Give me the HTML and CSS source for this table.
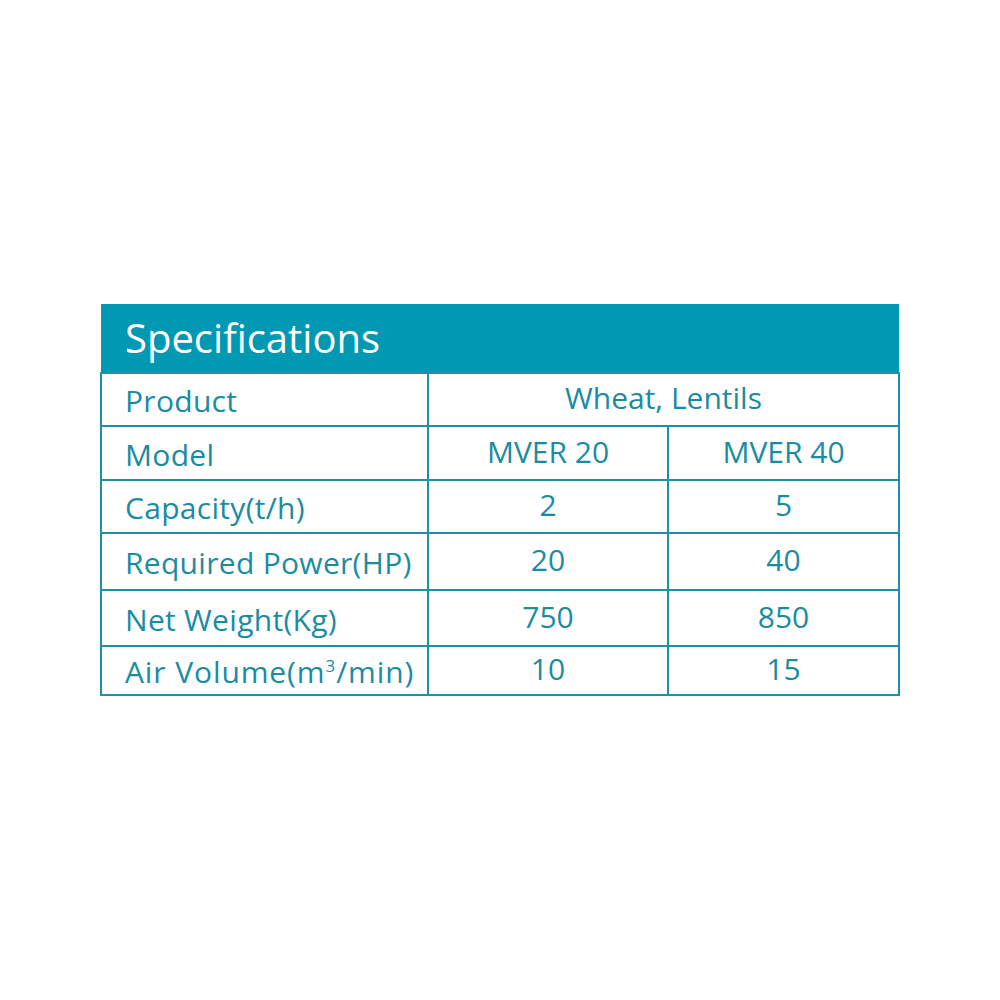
FILE: index.html
```html
<!DOCTYPE html>
<html>
<head>
	<meta charset="utf-8">
	<title>Specifications</title>
	<link rel="stylesheet" href="styles.css">
</head>
<body>
	<div class="page">
		<table class="spec-table">
			<colgroup>
				<col class="col-label">
				<col class="col-a">
				<col class="col-b">
			</colgroup>
			<tr class="head-row">
				<th colspan="3">Specifications</th>
			</tr>
			<tr class="r1">
				<td class="label">Product</td>
				<td colspan="2" class="val">Wheat, Lentils</td>
			</tr>
			<tr class="r2">
				<td class="label">Model</td>
				<td class="val">MVER 20</td>
				<td class="val">MVER 40</td>
			</tr>
			<tr class="r3">
				<td class="label">Capacity(t/h)</td>
				<td class="val">2</td>
				<td class="val">5</td>
			</tr>
			<tr class="r4">
				<td class="label">Required Power(HP)</td>
				<td class="val">20</td>
				<td class="val">40</td>
			</tr>
			<tr class="r5">
				<td class="label">Net Weight(Kg)</td>
				<td class="val">750</td>
				<td class="val">850</td>
			</tr>
			<tr class="r6">
				<td class="label wide">Air Volume(m<sup>3</sup>/min)</td>
				<td class="val">10</td>
				<td class="val">15</td>
			</tr>
		</table>
	</div>
</body>
</html>
```

FILE: styles.css
```css
body {
	margin: 0;
	padding: 0;
	background-color: #fff;
	font-family: "Open Sans", "Liberation Sans", sans-serif;
}

.page {
	width: 1000px;
	height: 1000px;
	padding-top: 304px;
	box-sizing: border-box;
}

.spec-table {
	margin-left: 100px;
	width: 800px;
	border-collapse: collapse;
	table-layout: fixed;
	color: #1a8ca2;
}

.col-label {
	width: 327px;
}

.col-a {
	width: 240px;
}

.head-row th {
	background-color: #0098b3;
	color: #fff;
	font-size: 40px;
	font-weight: normal;
	text-align: left;
	padding: 0 0 2px 24px;
	height: 69px;
	box-sizing: border-box;
	border: 0;
}

.spec-table td {
	border: 2px solid #1f90a6;
	font-size: 30px;
	padding: 0;
	white-space: nowrap;
	line-height: 1.2;
}

.label {
	padding: 3px 0 0 23px !important;
	letter-spacing: 0.3px;
}

.wide {
	letter-spacing: 0.9px;
}

.val {
	text-align: center;
	padding-bottom: 3px !important;
}

.r1 td, .r3 td { height: 48px; }
.r2 td { height: 49px; }
.r4 td { height: 52px; }
.r5 td { height: 51px; }
.r6 td { height: 44px; }

sup {
	font-size: 17px;
	vertical-align: 11px;
	line-height: 0;
}
```
